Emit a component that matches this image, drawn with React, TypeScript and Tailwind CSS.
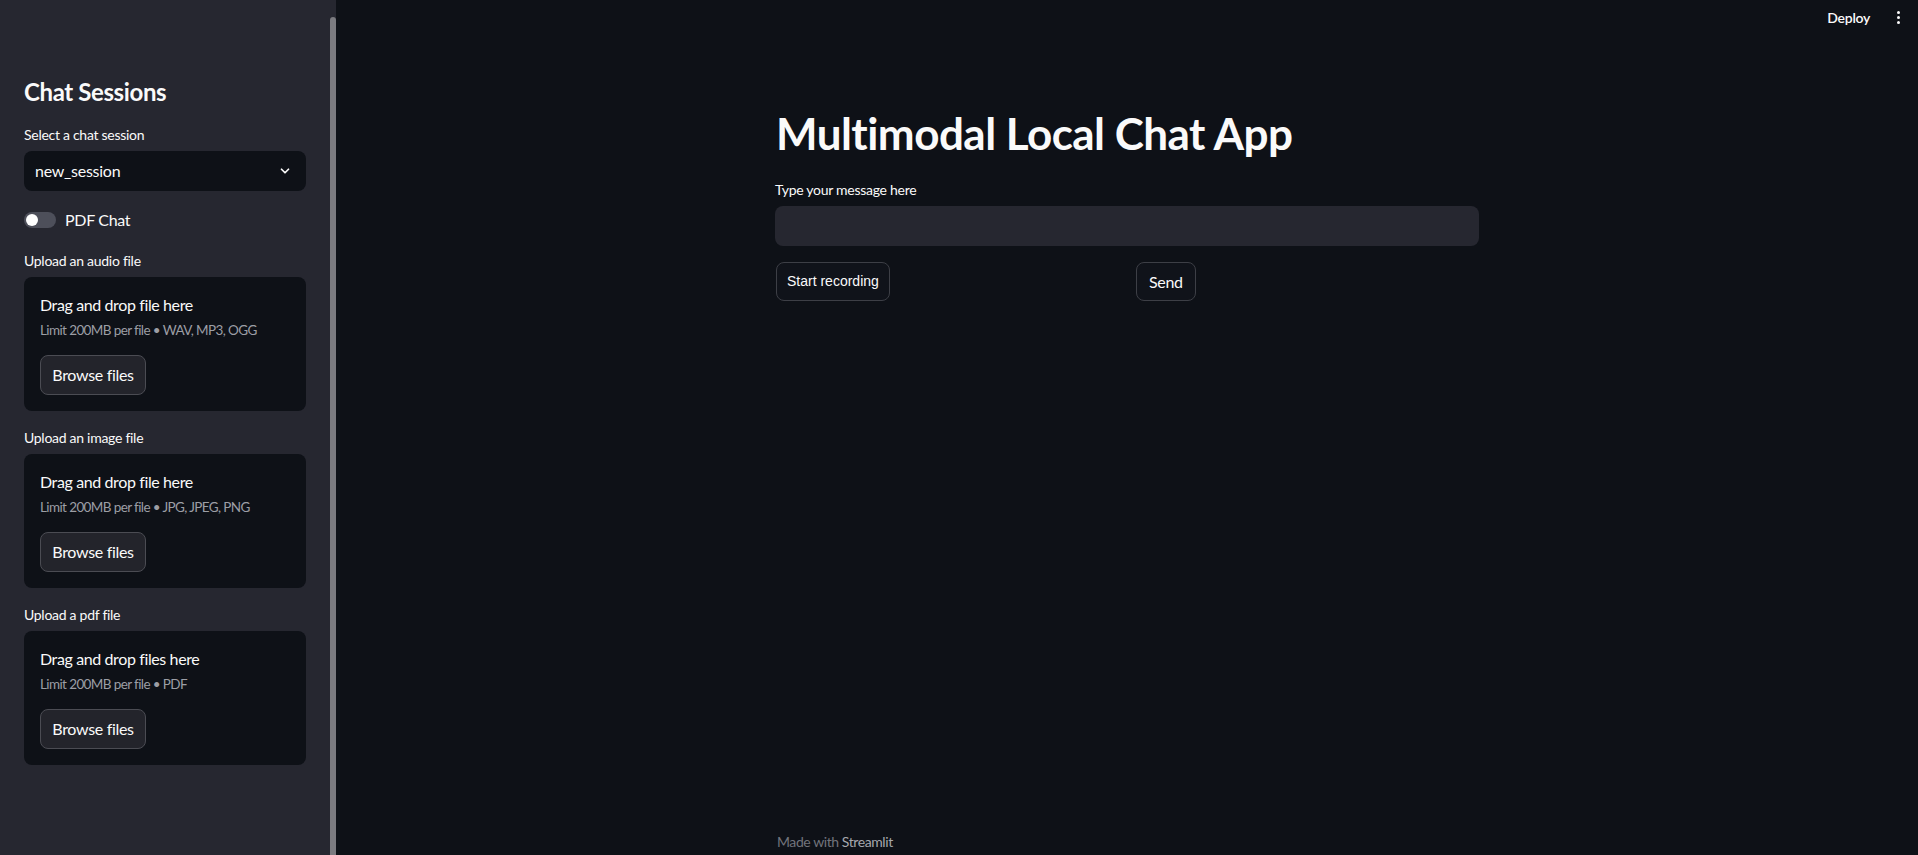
import React from "react";

function Chevron() {
  return (
    <svg width="14" height="14" viewBox="0 0 24 24" fill="none" stroke="#fafafa" strokeWidth="3" strokeLinecap="round" strokeLinejoin="round">
      <path d="M6 9l6 6 6-6" />
    </svg>
  );
}

function Uploader({ label, title, limit }: { label: string; title: string; limit: string }) {
  return (
    <div className="mt-4">
      <div className="h-[22px] text-[14px] leading-[22px] tracking-[-0.02em]">{label}</div>
      <div className="mt-[5px] flex flex-col items-start rounded-lg bg-[#0e1117] p-4">
        <div className="text-[16px] leading-[24px] tracking-[-0.024em]">{title}</div>
        <div className="mt-[3px] text-[13.5px] leading-[20px] tracking-[-0.045em] text-[#9c9ea5]">{limit}</div>
        <button className="mt-[15px] h-[40px] w-[106px] rounded-lg border border-[#4b4c53] bg-[#23242b] text-[16px] tracking-[-0.02em]">Browse files</button>
      </div>
    </div>
  );
}

export default function App() {
  return (
    <div className="flex h-[855px] w-[1918px] overflow-hidden bg-[#0e1117] font-['Lato',sans-serif] text-[#fafafa]">
      <aside className="relative w-[336px] shrink-0 bg-[#262730]">
        <div className="absolute bottom-0 right-0 top-[17px] w-[6px] rounded-t-full bg-[#7b7b80]" />
        <div className="pl-6 pr-[30px] pt-[76px]">
          <h2 className="text-[24px] font-bold leading-[32px] tracking-[-0.016em]">Chat Sessions</h2>
          <div className="mt-[16px] h-[22px] text-[14px] leading-[22px] tracking-[-0.02em]">Select a chat session</div>
          <div className="mt-[5px] flex h-[40px] items-center justify-between rounded-lg bg-[#0e1117] pl-[11px] pr-[14px] text-[16px] tracking-[-0.017em]">
            <span>new_session</span>
            <Chevron />
          </div>
          <div className="mt-[15px] flex h-[28px] items-center gap-[9px]">
            <div className="flex h-[16px] w-[32px] items-center rounded-full bg-[#4d4f5a] pl-[2px]">
              <div className="h-[12px] w-[12px] rounded-full bg-white" />
            </div>
            <span className="text-[16px] tracking-[-0.02em]">PDF Chat</span>
          </div>
          <Uploader label="Upload an audio file" title="Drag and drop file here" limit="Limit 200MB per file • WAV, MP3, OGG" />
          <Uploader label="Upload an image file" title="Drag and drop file here" limit="Limit 200MB per file • JPG, JPEG, PNG" />
          <Uploader label="Upload a pdf file" title="Drag and drop files here" limit="Limit 200MB per file • PDF" />
        </div>
      </aside>
      <main className="relative flex min-w-0 flex-1 flex-col">
        <header className="flex h-[34px] items-center justify-end pr-[18px]">
          <span className="text-[14px] font-semibold tracking-[-0.02em]">Deploy</span>
          <div className="ml-[27px] flex flex-col items-center gap-[2px]">
            <div className="h-[3px] w-[3px] rounded-full bg-[#fafafa]" />
            <div className="h-[3px] w-[3px] rounded-full bg-[#fafafa]" />
            <div className="h-[3px] w-[3px] rounded-full bg-[#fafafa]" />
          </div>
        </header>
        <div className="mx-auto flex w-[704px] flex-1 flex-col pt-[73px]">
          <h1 className="pl-[1px] text-[44px] font-bold leading-[53px] tracking-[-0.012em]">Multimodal Local Chat App</h1>
          <div className="mt-[19px] h-[22px] text-[14px] leading-[22px] tracking-[-0.02em]">Type your message here</div>
          <div className="mt-[5px] h-[40px] rounded-lg bg-[#262730]" />
          <div className="mt-4 grid grid-cols-2 gap-4">
            <div>
              <button className="ml-[1px] h-[39px] rounded-lg border border-[#3d3f46] bg-[#10131a] px-[10px] font-['Liberation_Sans',sans-serif] text-[14px]">Start recording</button>
            </div>
            <div>
              <button className="ml-[1px] h-[39px] rounded-lg border border-[#3d3f46] bg-[#10131a] px-[12px] text-[16px] tracking-[-0.02em]">Send</button>
            </div>
          </div>
          <div className="flex-1" />
          <div className="pb-[2px] pl-[2px] text-[14px] leading-[22px] tracking-[-0.03em] text-[#72747c]">
            Made with <span className="text-[#a6a8ae]">Streamlit</span>
          </div>
        </div>
      </main>
    </div>
  );
}
